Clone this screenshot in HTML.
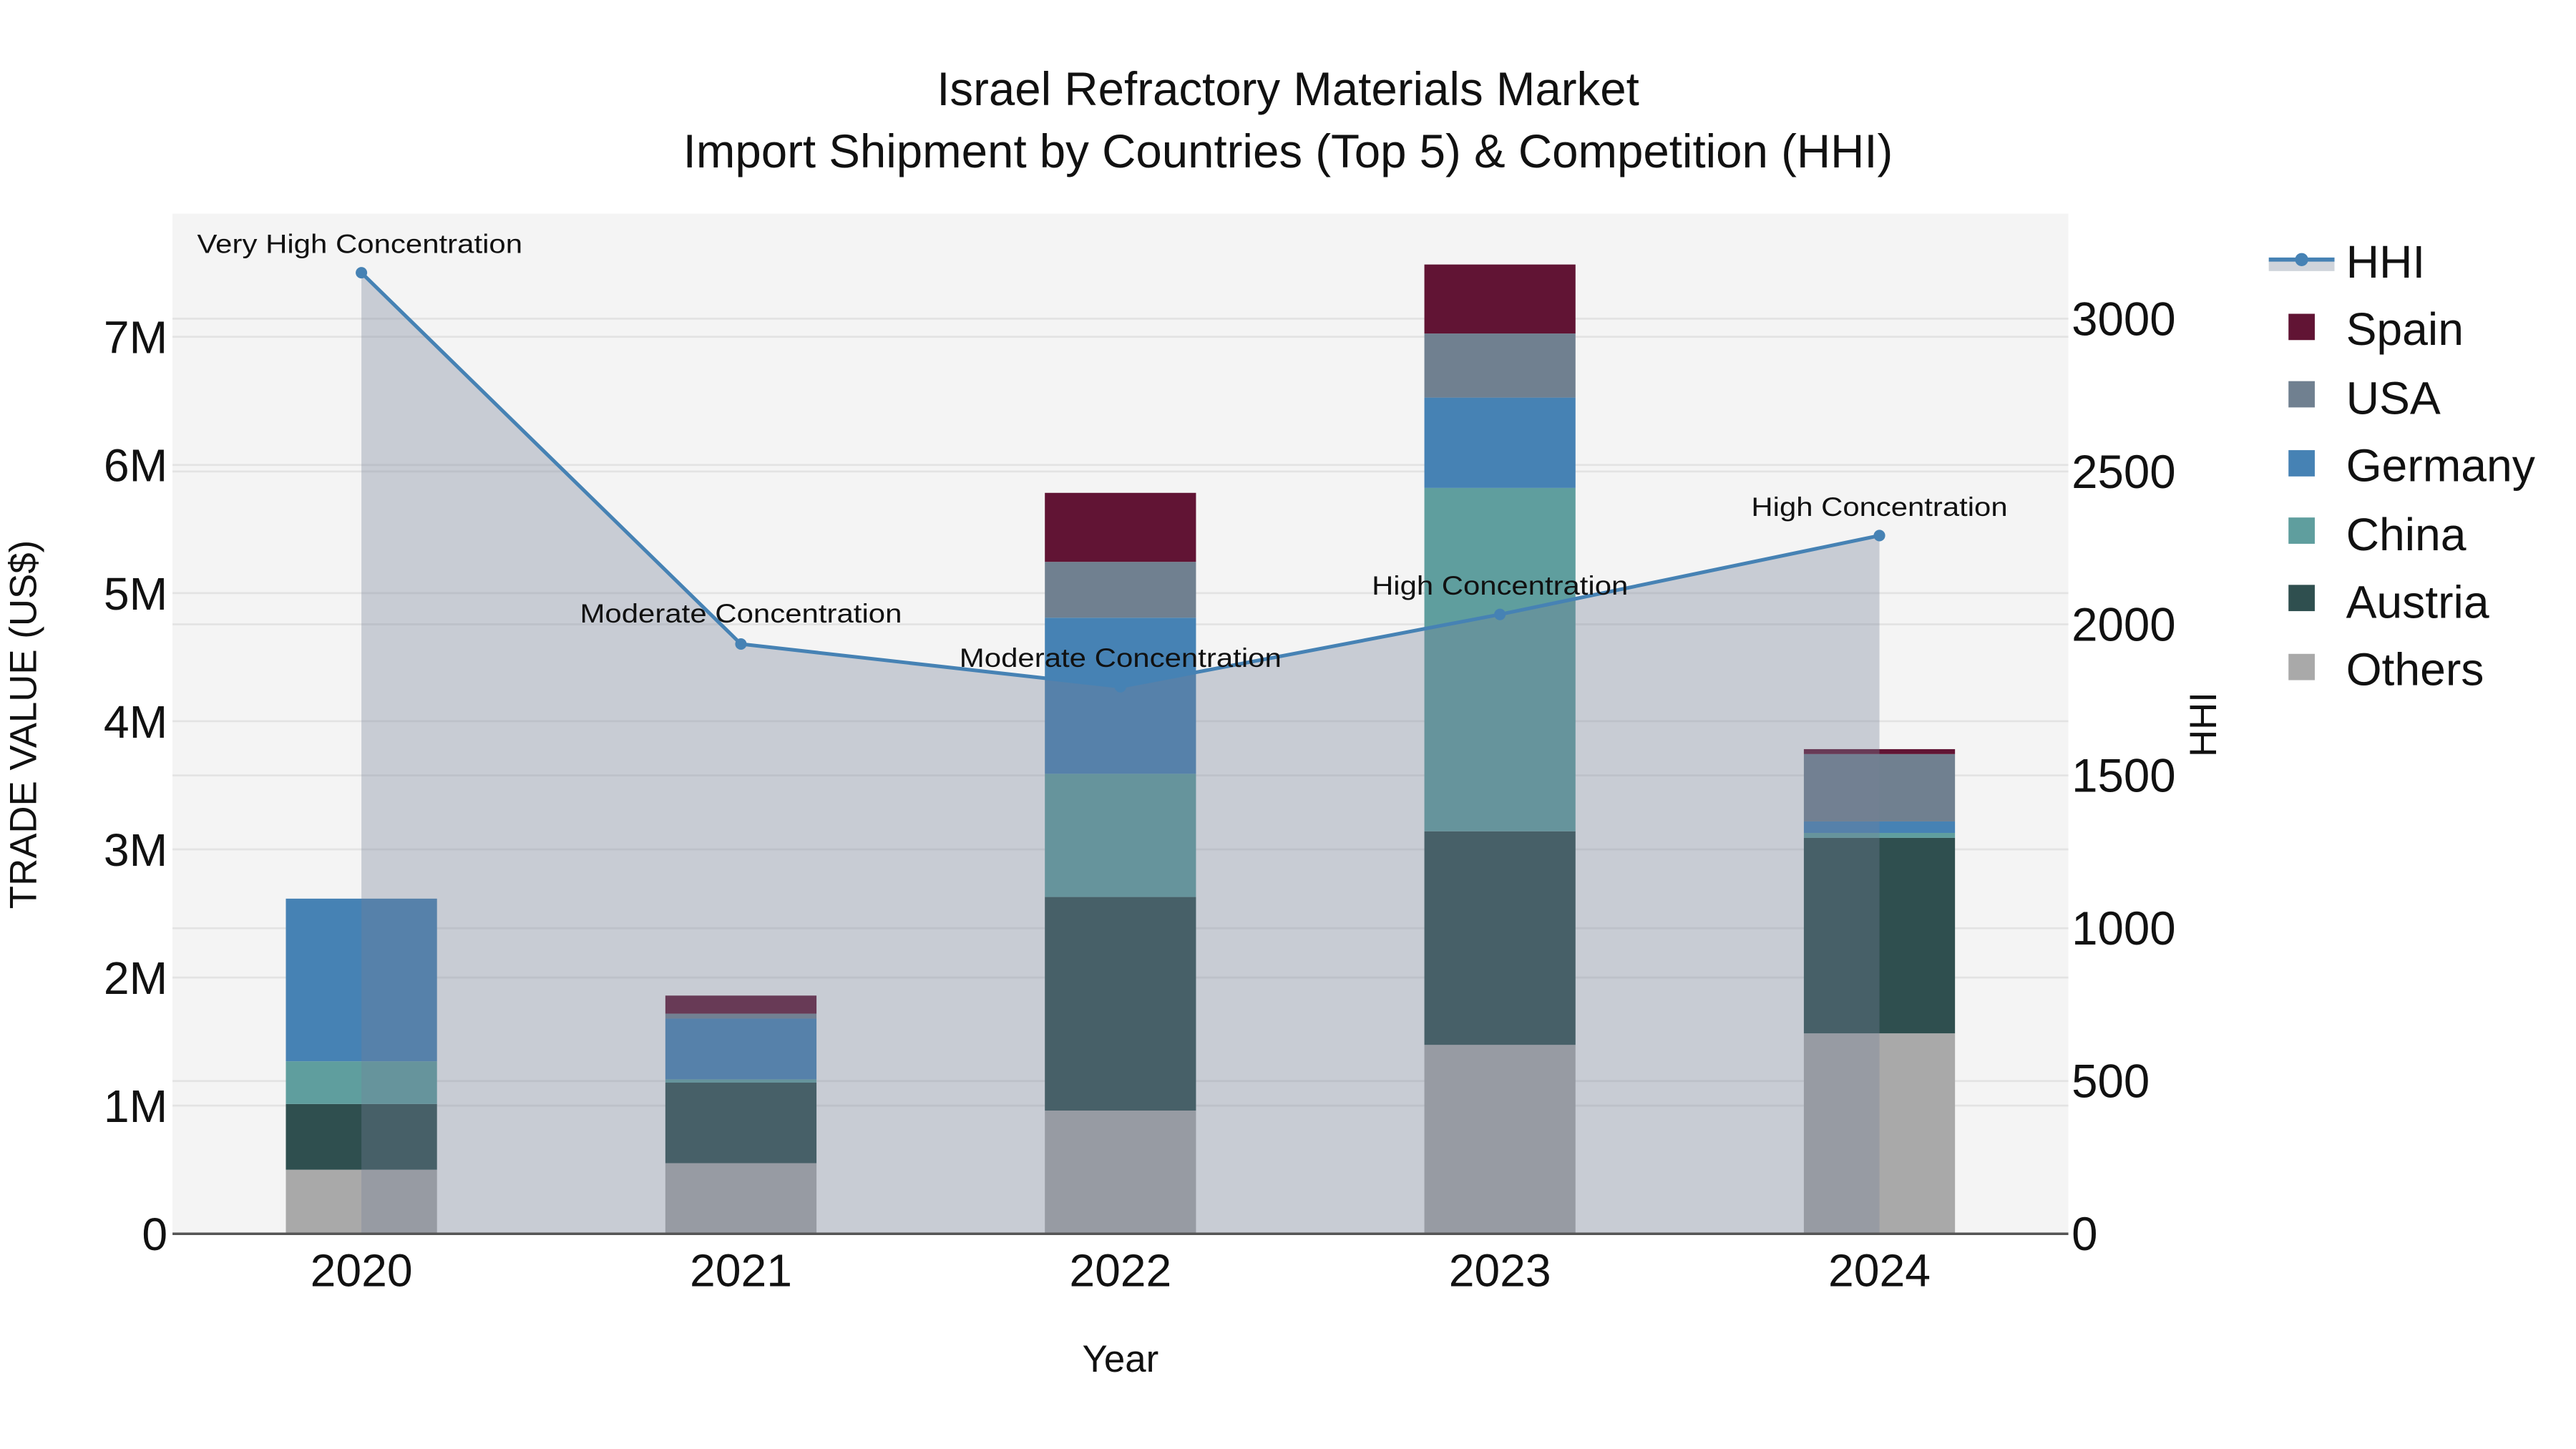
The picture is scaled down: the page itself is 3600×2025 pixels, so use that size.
<!DOCTYPE html>
<html><head><meta charset="utf-8"><style>
html,body{margin:0;padding:0;background:#fff;}
svg{display:block;}
text{font-family:"Liberation Sans",Arial,sans-serif;fill:#111;}
</style></head><body>
<svg width="3600" height="2025" viewBox="0 0 1568 882" xmlns="http://www.w3.org/2000/svg">
<rect x="0" y="0" width="1568" height="882" fill="#fff"/>
<rect x="105" y="130" width="1154" height="621" fill="#f4f4f4"/>
<g stroke="#e3e3e3" stroke-width="1.2">
<line x1="105" x2="1259" y1="673" y2="673"/><line x1="105" x2="1259" y1="595" y2="595"/>
<line x1="105" x2="1259" y1="517" y2="517"/><line x1="105" x2="1259" y1="439" y2="439"/>
<line x1="105" x2="1259" y1="361" y2="361"/><line x1="105" x2="1259" y1="283" y2="283"/>
<line x1="105" x2="1259" y1="205" y2="205"/>
<line x1="105" x2="1259" y1="658" y2="658"/><line x1="105" x2="1259" y1="565" y2="565"/>
<line x1="105" x2="1259" y1="472" y2="472"/><line x1="105" x2="1259" y1="380" y2="380"/>
<line x1="105" x2="1259" y1="287" y2="287"/><line x1="105" x2="1259" y1="194" y2="194"/>
</g>
<g>
<rect x="174" y="712" width="92" height="39" fill="#a9a9a9"/>
<rect x="174" y="672" width="92" height="40" fill="#2f4f4f"/>
<rect x="174" y="646" width="92" height="26" fill="#5f9e9e"/>
<rect x="174" y="547" width="92" height="99" fill="#4682b4"/>

<rect x="405" y="708" width="92" height="43" fill="#a9a9a9"/>
<rect x="405" y="659" width="92" height="49" fill="#2f4f4f"/>
<rect x="405" y="657" width="92" height="2" fill="#5f9e9e"/>
<rect x="405" y="620" width="92" height="37" fill="#4682b4"/>
<rect x="405" y="617" width="92" height="3" fill="#708090"/>
<rect x="405" y="606" width="92" height="11" fill="#611434"/>

<rect x="636" y="676" width="92" height="75" fill="#a9a9a9"/>
<rect x="636" y="546" width="92" height="130" fill="#2f4f4f"/>
<rect x="636" y="471" width="92" height="75" fill="#5f9e9e"/>
<rect x="636" y="376" width="92" height="95" fill="#4682b4"/>
<rect x="636" y="342" width="92" height="34" fill="#708090"/>
<rect x="636" y="300" width="92" height="42" fill="#611434"/>

<rect x="867" y="636" width="92" height="115" fill="#a9a9a9"/>
<rect x="867" y="506" width="92" height="130" fill="#2f4f4f"/>
<rect x="867" y="297" width="92" height="209" fill="#5f9e9e"/>
<rect x="867" y="242" width="92" height="55" fill="#4682b4"/>
<rect x="867" y="203" width="92" height="39" fill="#708090"/>
<rect x="867" y="161" width="92" height="42" fill="#611434"/>

<rect x="1098" y="629" width="92" height="122" fill="#a9a9a9"/>
<rect x="1098" y="510" width="92" height="119" fill="#2f4f4f"/>
<rect x="1098" y="507" width="92" height="3" fill="#5f9e9e"/>
<rect x="1098" y="500" width="92" height="7" fill="#4682b4"/>
<rect x="1098" y="459" width="92" height="41" fill="#708090"/>
<rect x="1098" y="456" width="92" height="3" fill="#611434"/>
</g>
<polygon points="220,751 220,166 451,392 682,418 913,374 1144,326 1144,751" fill="rgb(117,129,152)" fill-opacity="0.35"/>
<polyline points="220,166 451,392 682,418 913,374 1144,326" fill="none" stroke="#4682b4" stroke-width="2.2"/>
<g fill="#4682b4"><circle cx="220" cy="166" r="3.5"/><circle cx="451" cy="392" r="3.5"/><circle cx="682" cy="418" r="3.5"/><circle cx="913" cy="374" r="3.5"/><circle cx="1144" cy="326" r="3.5"/></g>
<line x1="105" x2="1259" y1="751" y2="751" stroke="#555" stroke-width="1.5"/>
<g font-size="16" text-anchor="middle">
<text x="219" y="154" textLength="198" lengthAdjust="spacingAndGlyphs">Very High Concentration</text>
<text x="451" y="379" textLength="196" lengthAdjust="spacingAndGlyphs">Moderate Concentration</text>
<text x="682" y="406" textLength="196" lengthAdjust="spacingAndGlyphs">Moderate Concentration</text>
<text x="913" y="362" textLength="156" lengthAdjust="spacingAndGlyphs">High Concentration</text>
<text x="1144" y="314" textLength="156" lengthAdjust="spacingAndGlyphs">High Concentration</text>
</g>
<g font-size="28" text-anchor="end">
<text x="102" y="761">0</text><text x="102" y="683">1M</text><text x="102" y="605">2M</text>
<text x="102" y="527">3M</text><text x="102" y="449">4M</text><text x="102" y="371">5M</text>
<text x="102" y="293">6M</text><text x="102" y="215">7M</text>
</g>
<g font-size="28.5" text-anchor="start">
<text x="1261" y="761">0</text><text x="1261" y="668">500</text><text x="1261" y="575">1000</text>
<text x="1261" y="482">1500</text><text x="1261" y="390">2000</text><text x="1261" y="297">2500</text>
<text x="1261" y="204">3000</text>
</g>
<g font-size="28" text-anchor="middle">
<text x="220" y="783">2020</text><text x="451" y="783">2021</text><text x="682" y="783">2022</text>
<text x="913" y="783">2023</text><text x="1144" y="783">2024</text>
</g>
<text x="682" y="835" font-size="23" text-anchor="middle">Year</text>
<text transform="translate(22,441) rotate(-90)" font-size="23" text-anchor="middle">TRADE VALUE (US$)</text>
<text transform="translate(1349,441) rotate(-90)" font-size="23" text-anchor="middle">HHI</text>
<g font-size="28.5" text-anchor="middle">
<text x="784" y="64">Israel Refractory Materials Market</text>
<text x="784" y="102">Import Shipment by Countries (Top 5) &amp; Competition (HHI)</text>
</g>
<rect x="1381" y="158" width="40" height="7" fill="#cfd4db"/>
<line x1="1381" x2="1421" y1="158" y2="158" stroke="#4682b4" stroke-width="2.5"/>
<circle cx="1401" cy="158" r="4" fill="#4682b4"/>
<rect x="1393" y="191" width="16" height="16" fill="#611434"/>
<rect x="1393" y="232" width="16" height="16" fill="#708090"/>
<rect x="1393" y="274" width="16" height="16" fill="#4682b4"/>
<rect x="1393" y="315" width="16" height="16" fill="#5f9e9e"/>
<rect x="1393" y="356" width="16" height="16" fill="#2f4f4f"/>
<rect x="1393" y="398" width="16" height="16" fill="#a9a9a9"/>
<g font-size="28">
<text x="1428" y="169">HHI</text><text x="1428" y="210">Spain</text><text x="1428" y="252">USA</text>
<text x="1428" y="293">Germany</text><text x="1428" y="335">China</text><text x="1428" y="376">Austria</text>
<text x="1428" y="417">Others</text>
</g>
</svg>
</body></html>
